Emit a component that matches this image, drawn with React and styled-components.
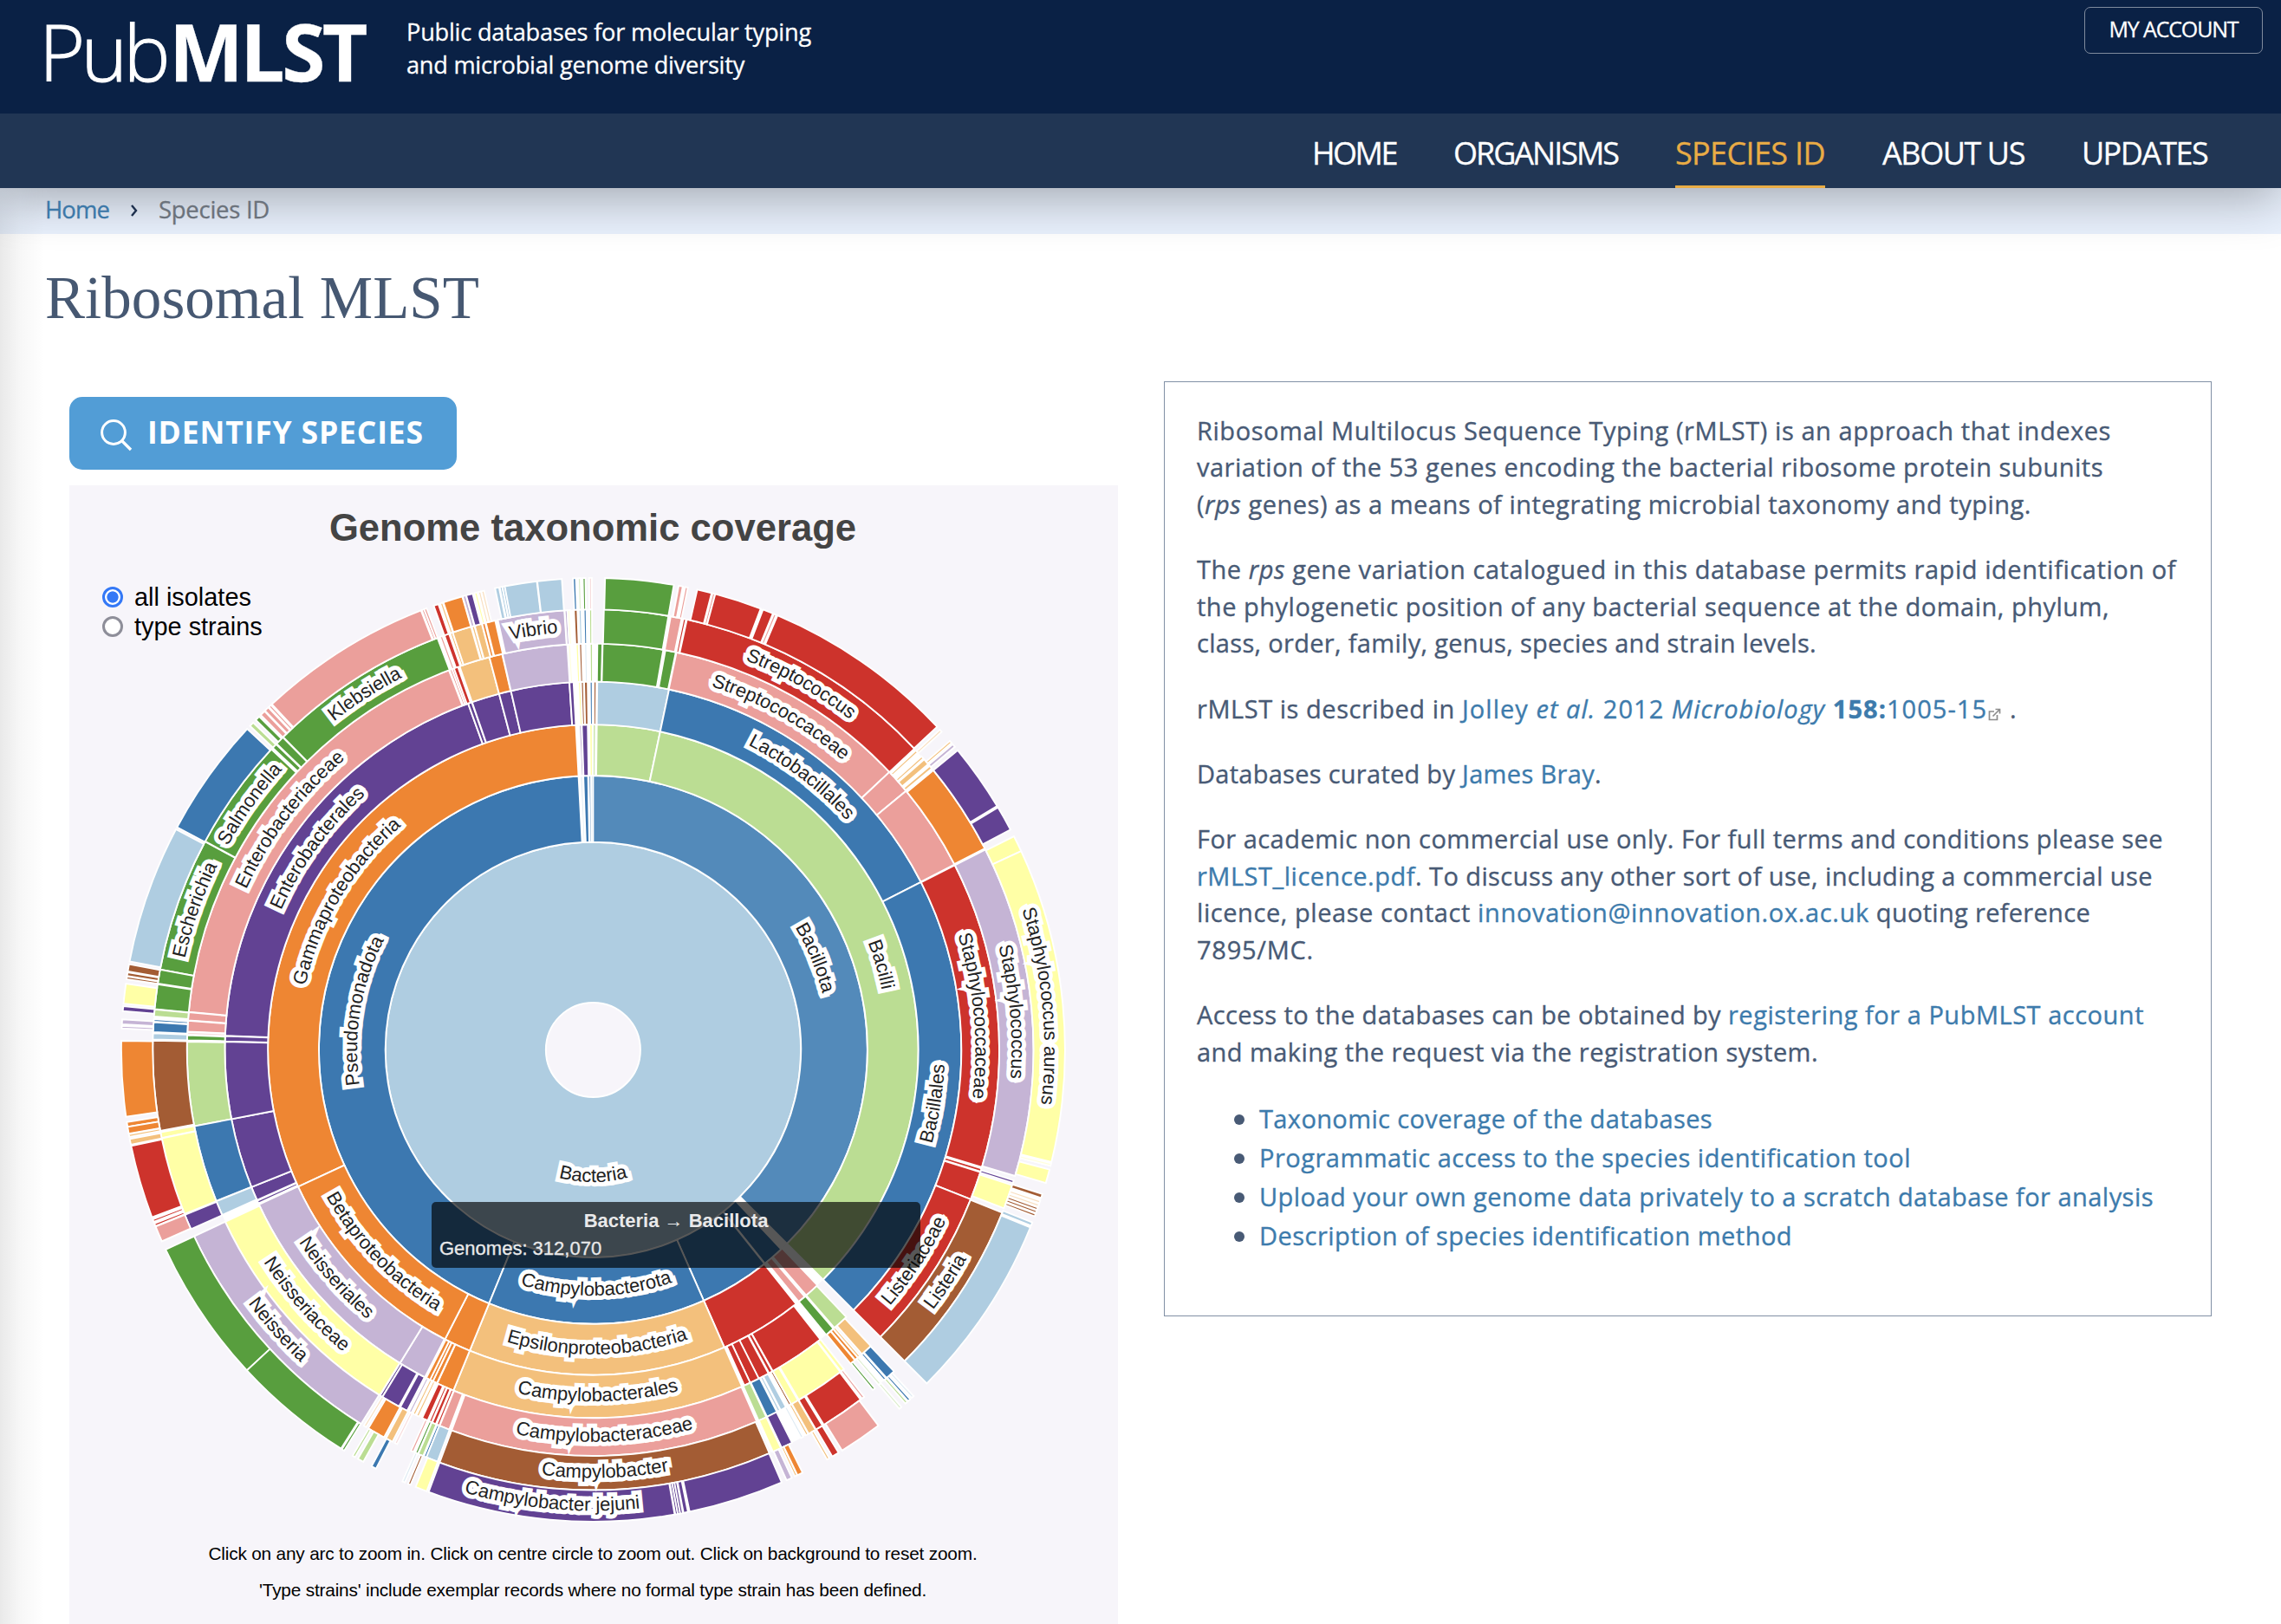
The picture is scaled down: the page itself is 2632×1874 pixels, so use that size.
import React, { useLayoutEffect, useRef, useState } from "react";
import styled, { createGlobalStyle } from "styled-components";

const GlobalStyle = createGlobalStyle`
  * { box-sizing: border-box; }
  html, body { margin: 0; padding: 0; background: #fff; }
  body { width: 2632px; height: 1874px; overflow: hidden; }
`;

const sans = `"Open Sans", "Noto Sans", sans-serif`;
const helv = `"Liberation Sans", Arial, sans-serif`;

/* ---------- text set to a given measure ---------- */
const Measure = styled.span`
  display: inline-block;
  white-space: nowrap;
`;

function Fit({ w, children }) {
  const ref = useRef(null);
  const [spacing, setSpacing] = useState(0);
  useLayoutEffect(() => {
    const el = ref.current;
    const natural = el.getBoundingClientRect().width;
    setSpacing((w - natural) / el.textContent.length);
  }, [w]);
  return (
    <Measure ref={ref} style={{ letterSpacing: `${spacing}px` }}>
      {children}
    </Measure>
  );
}

/* ---------- page frame ---------- */
const Page = styled.div`
  position: relative;
  width: 2632px;
  height: 1874px;
  overflow: hidden;
  background: #fff;
  font-family: ${sans};
  color: #485a75;
`;

const EdgeShade = styled.div`
  position: absolute;
  inset: 0 auto 0 0;
  width: 52px;
  pointer-events: none;
  background: linear-gradient(to right, rgba(0, 0, 0, 0.085), rgba(0, 0, 0, 0.03) 45%, rgba(0, 0, 0, 0));
`;

const Header = styled.header`
  position: relative;
  z-index: 2;
  display: flex;
  justify-content: space-between;
  align-items: flex-start;
  height: 131px;
  padding: 0 21px 0 45px;
  background: #0a2145;
  color: #fff;
  -webkit-text-stroke: 0.3px currentColor;
`;

const Brand = styled.div`
  display: flex;
  align-items: flex-start;
`;

const Logo = styled.div`
  display: flex;
  width: 424px;
  font-size: 91px;
  line-height: 118px;
  white-space: nowrap;
`;

const LogoLight = styled.span`
  width: 150px;
  font-weight: 300;
  -webkit-text-stroke: 1px currentColor;
`;

const LogoBold = styled.span`
  font-weight: 700;
`;

const Tagline = styled.div`
  padding-top: 18px;
  font-size: 27.2px;
  line-height: 38px;
`;

const Account = styled.button`
  width: 206px;
  height: 54px;
  margin-top: 8px;
  padding: 0 0 4px 0;
  border: 1px solid #7f8b9d;
  border-radius: 7px;
  background: transparent;
  color: #fff;
  font-family: inherit;
  font-size: 25px;
  line-height: 44px;
`;

const Nav = styled.nav`
  position: relative;
  z-index: 1;
  display: flex;
  justify-content: flex-end;
  gap: 66px;
  height: 86px;
  padding-right: 85px;
  background: #213654;
  box-shadow: 0 10px 60px rgba(0, 0, 0, 0.32);
  -webkit-text-stroke: 0.3px currentColor;
`;

const NavItem = styled.a`
  height: 86px;
  border-bottom: 3px solid ${(p) => (p.$active ? "#e9ac45" : "transparent")};
  color: ${(p) => (p.$active ? "#e9ac45" : "#fff")};
  font-size: 36px;
  line-height: 92px;
`;

const Crumbs = styled.div`
  display: flex;
  align-items: center;
  height: 53px;
  padding: 0 0 4px 52px;
  background: #e9f1fd;
  font-size: 27.5px;
  line-height: 49px;
  -webkit-text-stroke: 0.3px currentColor;
`;

const CrumbBar = styled.div`
  position: relative;
  z-index: 2;
  display: flex;
  align-items: center;
`;

const CrumbLink = styled.a`
  color: #3c78a8;
`;

const CrumbSep = styled.svg`
  width: 10px;
  height: 14px;
  margin: 3px 23px 0 24px;
`;

const CrumbHere = styled.span`
  color: #6b727b;
`;

const Below = styled.div`
  position: relative;
  z-index: 2;
`;

const Title = styled.h1`
  margin: 0;
  height: 170px;
  padding: 34px 0 0 52px;
  font-family: "Liberation Serif", serif;
  font-weight: 400;
  font-size: 69px;
  line-height: 80px;
  color: #465872;
`;

const Columns = styled.div`
  display: flex;
  align-items: flex-start;
  gap: 53px;
  padding-left: 80px;
`;

const Left = styled.div`
  width: 1210px;
  padding-top: 18px;
`;

const Identify = styled.button`
  display: flex;
  align-items: center;
  width: 447px;
  height: 84px;
  margin: 0 0 18px 0;
  padding: 0 0 0 35px;
  border: 0;
  border-radius: 15px;
  background: #529dd6;
  color: #fff;
  font-family: inherit;
  font-weight: 700;
  font-size: 35.5px;
  line-height: 80px;
  text-align: left;
`;

const SearchIcon = styled.svg`
  width: 38px;
  height: 38px;
  margin: 4px 17px 0 0;
`;

const ButtonText = styled.span`
  padding-bottom: 4px;
`;

/* ---------- chart ---------- */
const ChartPanel = styled.section`
  position: relative;
  height: 1320px;
  background: #f7f5fa;
  font-family: ${helv};
`;

const ChartTitle = styled.h2`
  margin: 0;
  padding-top: 23px;
  height: 95px;
  font-size: 43.6px;
  line-height: 52px;
  font-weight: 700;
  text-align: center;
  color: #444;
  text-indent: -2px;
`;

const Options = styled.div`
  position: absolute;
  left: 38px;
  top: 112px;
  display: flex;
  flex-direction: column;
`;

const Option = styled.label`
  display: flex;
  align-items: center;
  gap: 13px;
  height: 34px;
  font-size: 28.9px;
  line-height: 34px;
  color: #000;
`;

const Radio = styled.span`
  width: 24px;
  height: 24px;
  border-radius: 50%;
  border: ${(p) => (p.$on ? "3px solid #3478f6" : "3px solid #8e8e99")};
  background: ${(p) => (p.$on ? "radial-gradient(circle, #3478f6 0 6.2px, #fff 7px)" : "#fff")};
`;

const Chart = styled.svg`
  display: block;
  width: 1210px;
  height: 1112px;
`;

const Notes = styled.div`
  padding-top: 5px;
  text-align: center;
  text-indent: -1px;
  color: #000;
  font-size: 20.8px;
  line-height: 42px;
`;

const Tooltip = styled.div`
  position: absolute;
  left: 418px;
  top: 827px;
  width: 564px;
  height: 76px;
  padding: 6px 9px;
  border-radius: 5px;
  background: rgba(0, 0, 0, 0.66);
  color: #e9e9ea;
  font-size: 22px;
  line-height: 32px;
`;

const TooltipTitle = styled.div`
  font-weight: 700;
  text-align: center;
`;

const TooltipText = styled.div`
  text-align: left;
  -webkit-text-stroke: 0.3px currentColor;
`;

const Halo = styled.g`
  fill: none;
  stroke: #fff;
  stroke-width: 10px;
`;

const LabelText = styled.text`
  font: 22px ${helv};
  text-anchor: middle;
`;

const C = {
  lb: "#afcde1", b: "#3c78b0", lg: "#bbdd93", g: "#589e3e", p: "#eb9f9b", r: "#cd332c",
  lo: "#f3c07c", o: "#ee8633", l: "#c5b4d5", v: "#624293", y: "#ffffa6", br: "#a35c34",
  h: "#538aba", w: "#ffffff", fp: "#f7dcdc", fb: "#dfebf3", fg: "#dcedcc", fy: "#ffffdc", fo: "#f8dfc0",
};

/* rings from the inside out; each arc is [start, end, colour] in degrees, clockwise from the top */
const RINGS = [
  [[0, 360, "lb"]],
  [
    [-3.1, 0, "w"], [135, 137, "w"],
    [202.3, 356.95, "b"], [-2.6, -2.3, "fb"], [-2.05, -1.05, "b"], [-0.9, -0.35, "b"], [-0.3, 0, "lb"],
    [0, 135, "h"], [136.7, 141.2, "b"], [141.3, 156.2, "b"], [156.2, 202.3, "b"],
  ],
  [
    [-3.1, 0.65, "w"], [135, 136.6, "w"], [140.6, 141.4, "w"],
    [245.1, 356.95, "o"], [-2.4, -2.1, "l"], [-2.0, -0.95, "v"], [-0.65, -0.1, "y"], [0.1, 0.35, "lg"],
    [0.65, 11.9, "lg"], [11.9, 135, "lg"], [136.4, 139.05, "p"], [139.4, 140.8, "p"],
    [141.4, 156.2, "r"], [156.2, 202.3, "lo"], [202.3, 207.1, "o"], [207.1, 245.1, "o"],
  ],
  [
    [-3.1, 0.65, "w"], [-20.6, -12.9, "w"], [202.3, 207.2, "w"], [140.7, 156.15, "w"], [245.2, 246, "w"],
    [272.2, 340.15, "v"], [271.3, 272.15, "v"], [-19.85, -19.25, "v"], [-19.2, -14.8, "v"], [-14.8, -12.9, "v"],
    [-12.9, -3.69, "v"], [-3.69, -3.05, "v"],
    [-2.3, -1.95, "y"], [-1.8, -1.55, "br"], [-1.4, -0.85, "br"], [-0.5, -0.1, "b"], [0.15, 0.45, "br"],
    [0.65, 11.9, "lb"], [11.9, 62.9, "b"], [62.9, 135, "b"],
    [136.55, 139.05, "lg"], [139.25, 140.75, "g"], [141.9, 150.8, "r"], [150.85, 151.45, "r"],
    [151.55, 153.3, "r"], [153.25, 154.75, "r"], [154.75, 155.75, "r"],
    [156.15, 202.3, "lo"], [202.3, 205.05, "o"], [205.1, 205.8, "o"], [205.8, 206.3, "o"], [206.3, 206.95, "o"],
    [207.2, 211.65, "l"], [211.65, 245.15, "l"], [245.45, 245.7, "v"], [245.9, 248.1, "v"],
    [248.1, 259.15, "v"], [259.15, 271.25, "v"],
  ],
  [
    [-3.7, 0.65, "w"], [-20.8, -12.9, "w"], [200.4, 207.1, "w"], [141.8, 156.2, "w"], [270.9, 275.3, "w"], [245, 246.1, "w"],
    [139, 140.7, "w"], [106.8, 111.6, "w"],
    [275.35, 339.2, "p"], [274.15, 275.3, "p"], [272.55, 274.1, "p"], [272.2, 272.45, "fp"], [271.35, 272.05, "g"],
    [259.15, 271.15, "lg"], [248.15, 259.15, "b"], [246.0, 248.1, "lb"],
    [211.7, 244.95, "y"], [211.3, 211.6, "v"], [208.55, 211.25, "v"], [207.25, 208.35, "v"],
    [206.6, 206.95, "l"], [206.0, 206.3, "lo"], [205.45, 205.75, "lo"], [204.05, 204.9, "r"],
    [203.45, 203.8, "r"], [202.8, 203.35, "r"], [202.3, 202.65, "r"], [200.75, 202.2, "p"],
    [156.25, 200.4, "p"], [154.75, 155.95, "lg"], [153.1, 154.65, "b"], [152.6, 152.95, "lb"],
    [151.65, 152.5, "lb"], [150.8, 151.15, "br"], [149.7, 150.8, "y"], [142.5, 149.55, "y"], [141.85, 142.4, "y"],
    [139.85, 140.65, "o"], [139.3, 139.8, "o"], [139.0, 139.2, "lo"], [136.85, 138.55, "lo"],
    [-20.6, -20.4, "p"], [-20.25, -20.05, "p"], [-20.05, -19.45, "r"], [-19.2, -14.8, "lo"], [-14.8, -12.95, "o"],
    [-12.9, -3.65, "l"], [-3.4, -3.3, "fy"],
    [-2.45, -2.05, "y"], [-1.95, -1.6, "br"], [-1.15, -0.95, "fb"], [-0.45, -0.05, "lg"],
    [0.6, 1.3, "g"], [1.35, 9.95, "g"], [10.25, 11.75, "g"], [11.85, 46.85, "p"], [46.85, 50.4, "p"], [50.4, 62.85, "p"],
    [62.95, 106.8, "r"], [107.0, 107.45, "r"], [107.55, 111.6, "r"], [111.6, 135, "r"],
  ],
  [
    [-3.8, -0.2, "w"], [-20.7, -12.5, "w"], [9.85, 12.3, "w"], [46.85, 50.6, "w"], [202.2, 204.4, "w"],
    [271, 275.3, "w"], [141.9, 142.6, "w"], [148.4, 156.2, "w"], [-47, -44.6, "w"], [138, 139.6, "w"],
    [280.5, 298.2, "g"], [278.65, 280.5, "g"], [275.3, 278.55, "g"], [274.35, 275.25, "lg"], [273.65, 274.0, "b"],
    [272.3, 273.6, "b"], [271.35, 272.15, "lb"], [259.4, 271.2, "br"], [258.45, 259.2, "y"], [248.1, 258.4, "y"],
    [245.95, 248.0, "v"], [211.8, 244.95, "l"], [211.1, 211.3, "fo"], [208.35, 210.7, "o"], [207.1, 208.05, "lo"],
    [206.5, 206.7, "fp"], [204.1, 204.4, "p"], [203.5, 203.75, "g"], [202.7, 203.4, "lg"], [202.3, 202.55, "b"],
    [200.7, 202.25, "lb"], [156.4, 200.4, "br"], [154.75, 155.9, "y"], [153.15, 154.65, "v"], [151.6, 151.75, "fb"],
    [150.85, 151.0, "lo"], [149.65, 150.7, "lo"], [148.6, 149.6, "r"], [142.6, 148.4, "r"], [142.1, 142.3, "p"],
    [140.25, 140.55, "g"], [139.3, 139.5, "fg"], [138.3, 138.65, "b"], [136.9, 138.2, "b"],
    [-61.75, -46.95, "g"], [-46.7, -46.05, "g"], [-45.95, -44.8, "g"], [-44.75, -20.7, "g"],
    [-20.3, -20.05, "p"], [-19.75, -19.1, "r"], [-18.9, -18.65, "lo"], [-18.6, -16.1, "lo"], [-16.0, -15.65, "lo"],
    [-15.6, -14.65, "lo"], [-14.6, -14.2, "o"], [-14.1, -12.85, "o"], [-12.5, -3.75, "l"],
    [-3.6, -3.45, "l"], [-3.25, -3.1, "fy"],
    [-2.5, -2.05, "br"], [-1.85, -1.55, "lb"], [-1.2, -0.9, "b"], [-0.4, -0.25, "lg"],
    [1.4, 9.85, "g"], [10.15, 11.6, "p"], [11.85, 12.15, "r"], [12.3, 46.85, "r"],
    [47.15, 47.5, "lo"], [48.3, 48.5, "lo"], [48.75, 49.55, "lo"], [49.85, 50.3, "lo"], [50.6, 62.8, "o"],
    [62.95, 106.65, "l"], [107.25, 107.6, "v"], [107.9, 111.1, "y"], [111.7, 135, "br"],
  ],
  [
    [-2.5, -0.9, "w"], [-11.5, -10.8, "w"], [14.6, 15, "w"], [20.8, 21.1, "w"], [22.4, 23, "w"], [10.9, 11.5, "w"],
    [-44.9, -42.9, "w"], [103.8, 104.3, "w"], [108.4, 110.7, "w"], [247.9, 249.3, "w"],
    [-79.2, -62.15, "lb"], [279.55, 280.45, "br"], [279.0, 279.45, "br"], [278.7, 278.85, "br"], [275.6, 278.05, "y"],
    [274.7, 275.3, "v"], [273.1, 273.7, "l"], [272.6, 272.9, "l"], [261.85, 271.1, "o"], [260.6, 261.2, "o"],
    [259.75, 260.6, "o"], [259.45, 259.6, "lo"], [258.4, 259.1, "lo"], [249.2, 258.25, "r"],
    [248.7, 248.85, "r"], [248.15, 248.3, "r"], [246.05, 248.0, "p"], [227.2, 244.95, "g"], [212.3, 227.2, "g"],
    [211.85, 212.15, "g"], [210.4, 210.55, "lg"], [209.15, 209.9, "lg"], [207.4, 208.0, "b"],
    [203.6, 203.75, "fb"], [202.85, 203.0, "br"], [200.65, 202.1, "y"],
    [170.05, 200.4, "v"], [169.7, 169.9, "v"], [169.4, 169.6, "v"], [169.1, 169.3, "v"], [168.4, 168.95, "v"],
    [156.45, 168.2, "v"], [155.1, 155.8, "l"], [154.45, 154.6, "lo"], [153.65, 154.35, "o"],
    [150.05, 150.2, "lo"], [148.65, 149.55, "r"], [142.8, 148.15, "p"], [139.3, 139.45, "fg"],
    [138.3, 138.5, "lg"], [137.8, 138.1, "b"], [137.3, 137.45, "fb"],
    [-61.85, -47.15, "b"], [-46.65, -46.1, "lg"], [-45.65, -45.05, "g"], [-44.8, -44.15, "p"], [-44.05, -43.5, "p"],
    [-43.35, -43.1, "p"], [-42.9, -21.4, "p"], [-21.2, -21.05, "p"], [-20.9, -20.75, "p"],
    [-19.75, -19.15, "r"], [-18.85, -18.65, "lo"], [-18.5, -16.1, "o"], [-16.05, -15.65, "l"], [-15.6, -14.8, "v"],
    [-14.5, -14.3, "y"], [-14.0, -13.85, "fo"], [-13.6, -13.45, "fo"],
    [-12.0, -11.5, "lb"], [-11.35, -11.15, "lb"], [-11.0, -10.85, "lb"], [-10.8, -6.85, "lb"], [-6.8, -3.8, "lb"],
    [-2.45, -2.1, "b"], [-1.75, -1.6, "fg"], [-1.25, -0.95, "g"], [-0.4, -0.25, "fp"],
    [1.45, 9.85, "g"], [10.45, 10.95, "p"], [11.3, 11.55, "p"], [12.75, 14.55, "r"], [14.75, 14.9, "p"],
    [15.0, 20.8, "r"], [21.1, 22.4, "r"], [22.6, 22.75, "p"], [23.0, 46.8, "r"], [47.4, 47.5, "fo"],
    [49.2, 49.35, "lo"], [49.65, 50.05, "l"], [50.6, 58.9, "v"], [59.1, 62.2, "v"],
    [63.1, 65.1, "y"], [65.1, 103.75, "y"], [104.0, 104.15, "fy"], [104.7, 106.4, "y"], [107.8, 108.3, "br"],
    [108.75, 108.85, "fo"], [109.2, 109.3, "fo"], [109.6, 109.75, "br"], [110.0, 110.15, "br"], [110.45, 110.55, "br"],
    [111.45, 111.9, "lb"], [112.1, 135, "lb"],
  ],
];

/* [text, ring, angle of the label's middle] */
const LABELS = [
  ["Bacteria", 0, 180],
  ["Pseudomonadota", 1, 279.6], ["Bacillota", 1, 67.5], ["Campylobacterota", 1, 179.2],
  ["Gammaproteobacteria", 2, 301], ["Betaproteobacteria", 2, 226.1], ["Epsilonproteobacteria", 2, 179.2], ["Bacilli", 2, 73.5],
  ["Enterobacterales", 3, 306.15], ["Neisseriales", 3, 228.4], ["Campylobacterales", 3, 179.2],
  ["Lactobacillales", 3, 37.4], ["Bacillales", 3, 98.95],
  ["Enterobacteriaceae", 4, 307.2], ["Neisseriaceae", 4, 228.4], ["Campylobacteraceae", 4, 178.3],
  ["Streptococcaceae", 4, 29.4], ["Staphylococcaceae", 4, 84.9], ["Listeriaceae", 4, 123.3],
  ["Klebsiella", 5, 327.3], ["Salmonella", 5, 305.6], ["Escherichia", 5, 289.35], ["Vibrio", 5, 351.9],
  ["Neisseria", 5, 228.4], ["Campylobacter", 5, 178.4], ["Streptococcus", 5, 29.6], ["Staphylococcus", 5, 84.8],
  ["Listeria", 5, 123.35],
  ["Staphylococcus aureus", 6, 84.4], ["Campylobacter jejuni", 6, 185.2],
];

const radiusAt = (k) => 54.5 + 490 * Math.sqrt(k / 7);

const point = (r, deg) => {
  const a = (deg * Math.PI) / 180;
  return [(r * Math.sin(a)).toFixed(2), (-r * Math.cos(a)).toFixed(2)];
};

function arcPath(ring, from, to) {
  const r0 = radiusAt(ring);
  const r1 = radiusAt(ring + 1);
  const minSpan = (3.1 / r1) * (180 / Math.PI);
  let a = from;
  let b = to;
  if (b - a < minSpan) {
    const mid = (a + b) / 2;
    a = mid - minSpan / 2;
    b = mid + minSpan / 2;
  }
  const big = b - a > 180 ? 1 : 0;
  return `M${point(r1, a)}A${r1},${r1} 0 ${big} 1 ${point(r1, b)}L${point(r0, b)}A${r0},${r0} 0 ${big} 0 ${point(r0, a)}Z`;
}

function labelPath(ring, mid) {
  const flipped = mid > 90 && mid < 270;
  const r = (radiusAt(ring) + radiusAt(ring + 1)) / 2 + (flipped ? 5.6 : -5.6);
  return flipped
    ? `M${point(r, mid + 80)}A${r},${r} 0 0 0 ${point(r, mid - 80)}`
    : `M${point(r, mid - 80)}A${r},${r} 0 0 1 ${point(r, mid + 80)}`;
}

function Sunburst() {
  return (
    <Chart viewBox="-604.4 -556.4 1210 1112">
      {RINGS.map((arcs, ring) =>
        ring === 0 ? (
          <g key={ring}>
            <circle r={radiusAt(1)} fill={C.lb} stroke="#fff" strokeWidth="2" />
            <circle r={radiusAt(0)} fill="#f7f5fa" stroke="#fff" strokeWidth="2" />
          </g>
        ) : (
          <g key={ring}>
            {arcs.map(([a, b, c], i) => (
              <path key={i} d={arcPath(ring, a, b)} fill={C[c]} stroke="#fff" strokeWidth={c === "w" ? 0 : 1.9} />
            ))}
          </g>
        )
      )}
      {LABELS.map(([text, ring, mid]) => {
        const id = text.replace(" ", "-");
        return (
          <g key={id}>
            <path id={`${id}-line`} d={labelPath(ring, mid)} fill="none" />
            <Halo>
              <use href={`#${id}`} />
            </Halo>
            <g fill="#222">
              <LabelText id={id}>
                <textPath href={`#${id}-line`} startOffset="50%">{text}</textPath>
              </LabelText>
            </g>
          </g>
        );
      })}
    </Chart>
  );
}

/* ---------- article ---------- */
const Info = styled.article`
  width: 1209px;
  height: 1079px;
  padding: 34.5px 36px 0 37px;
  border: 1px solid #8190a5;
  font-size: 29px;
  line-height: 42.7px;
  -webkit-text-stroke: 0.35px currentColor;
`;

const Para = styled.p`
  margin: 0 0 32.5px 0;
`;

const Row = styled.span`
  display: block;
  height: 42.7px;
  white-space: nowrap;
`;

const Link = styled.a`
  color: #3d7bac;
`;

const ExtIcon = styled.svg`
  width: 15px;
  height: 15px;
  margin: 0 10px -3px 1px;
`;

const List = styled.ul`
  margin: 0;
  padding: 0 0 0 73px;
  list-style: none;
  line-height: 45.1px;
`;

const Item = styled.li`
  display: flex;
  align-items: center;
  height: 45.1px;

  &::before {
    content: "";
    width: 12px;
    height: 12px;
    margin: 3px 17px 0 -30px;
    border-radius: 50%;
    background: #485a75;
  }
`;

const NAV = [
  ["HOME", 97], ["ORGANISMS", 190], ["SPECIES ID", 173], ["ABOUT US", 164], ["UPDATES", 145],
];

export default function App() {
  return (
    <Page>
      <GlobalStyle />
      <Header>
        <Brand>
          <Logo>
            <LogoLight><Fit w={147}>Pub</Fit></LogoLight>
            <LogoBold><Fit w={226}>MLST</Fit></LogoBold>
          </Logo>
          <Tagline>
            <Fit w={467}>Public databases for molecular typing</Fit>
            <br />
            <Fit w={390}>and microbial genome diversity</Fit>
          </Tagline>
        </Brand>
        <Account><Fit w={149}>MY ACCOUNT</Fit></Account>
      </Header>
      <Nav>
        {NAV.map(([name, w]) => (
          <NavItem key={name} $active={name === "SPECIES ID"}><Fit w={w}>{name}</Fit></NavItem>
        ))}
      </Nav>
      <Crumbs>
        <CrumbBar>
          <CrumbLink><Fit w={74}>Home</Fit></CrumbLink>
          <CrumbSep viewBox="0 0 10 14"><path d="M2 1l5 6-5 6" fill="none" stroke="#1d2f4d" strokeWidth="2.4" /></CrumbSep>
          <CrumbHere><Fit w={128}>Species ID</Fit></CrumbHere>
        </CrumbBar>
      </Crumbs>
      <Below>
        <Title><Fit w={501}>Ribosomal MLST</Fit></Title>
        <Columns>
          <Left>
            <Identify>
              <SearchIcon viewBox="0 0 38 38">
                <circle cx="16" cy="16" r="13.4" fill="none" stroke="#fff" strokeWidth="3" />
                <path d="M25.5 25.5L36 36" stroke="#fff" strokeWidth="3.4" />
              </SearchIcon>
              <ButtonText><Fit w={319}>IDENTIFY SPECIES</Fit></ButtonText>
            </Identify>
            <ChartPanel>
              <ChartTitle>Genome taxonomic coverage</ChartTitle>
              <Sunburst />
              <Notes>
                <div><Fit w={886}>Click on any arc to zoom in. Click on centre circle to zoom out. Click on background to reset zoom.</Fit></div>
                <div><Fit w={769}>'Type strains' include exemplar records where no formal type strain has been defined.</Fit></div>
              </Notes>
              <Options>
                <Option><Radio $on />all isolates</Option>
                <Option><Radio />type strains</Option>
              </Options>
              <Tooltip>
                <TooltipTitle>Bacteria → Bacillota</TooltipTitle>
                <TooltipText>Genomes: 312,070</TooltipText>
              </Tooltip>
            </ChartPanel>
          </Left>
          <Info>
            <Para>
              <Row><Fit w={1055}>Ribosomal Multilocus Sequence Typing (rMLST) is an approach that indexes</Fit></Row>
              <Row><Fit w={1046}>variation of the 53 genes encoding the bacterial ribosome protein subunits</Fit></Row>
              <Row><Fit w={963}>(<i>rps</i> genes) as a means of integrating microbial taxonomy and typing.</Fit></Row>
            </Para>
            <Para>
              <Row><Fit w={1130}>The <i>rps</i> gene variation catalogued in this database permits rapid identification of</Fit></Row>
              <Row><Fit w={1053}>the phylogenetic position of any bacterial sequence at the domain, phylum,</Fit></Row>
              <Row><Fit w={715}>class, order, family, genus, species and strain levels.</Fit></Row>
            </Para>
            <Para>
              <Row>
                <Fit w={306}>rMLST is described in&nbsp;</Fit>
                <Link><Fit w={606}>Jolley <i>et al.</i> 2012 <i>Microbiology</i> <b>158:</b>1005-15</Fit></Link>
                <ExtIcon viewBox="0 0 15 15">
                  <path d="M7 4H1.5v9.5h9V8M5.5 9.5L13 2M8.5 1.5h5v5" fill="none" stroke="#8c8c8c" strokeWidth="1.7" />
                </ExtIcon>
                .
              </Row>
            </Para>
            <Para>
              <Row>
                <Fit w={306}>Databases curated by&nbsp;</Fit>
                <Link><Fit w={153}>James Bray</Fit></Link>.
              </Row>
            </Para>
            <Para>
              <Row><Fit w={1115}>For academic non commercial use only. For full terms and conditions please see</Fit></Row>
              <Row>
                <Link><Fit w={252}>rMLST_licence.pdf</Fit></Link>
                <Fit w={851}>. To discuss any other sort of use, including a commercial use</Fit>
              </Row>
              <Row>
                <Fit w={324}>licence, please contact&nbsp;</Fit>
                <Link><Fit w={452}>innovation@innovation.ox.ac.uk</Fit></Link>
                <Fit w={255}>&nbsp;quoting reference</Fit>
              </Row>
              <Row><Fit w={135}>7895/MC.</Fit></Row>
            </Para>
            <Para>
              <Row>
                <Fit w={613}>Access to the databases can be obtained by&nbsp;</Fit>
                <Link><Fit w={480}>registering for a PubMLST account</Fit></Link>
              </Row>
              <Row><Fit w={717}>and making the request via the registration system.</Fit></Row>
            </Para>
            <List>
              <Item><Link><Fit w={523}>Taxonomic coverage of the databases</Fit></Link></Item>
              <Item><Link><Fit w={752}>Programmatic access to the species identification tool</Fit></Link></Item>
              <Item><Link><Fit w={1032}>Upload your own genome data privately to a scratch database for analysis</Fit></Link></Item>
              <Item><Link><Fit w={615}>Description of species identification method</Fit></Link></Item>
            </List>
          </Info>
        </Columns>
      </Below>
      <EdgeShade />
    </Page>
  );
}
